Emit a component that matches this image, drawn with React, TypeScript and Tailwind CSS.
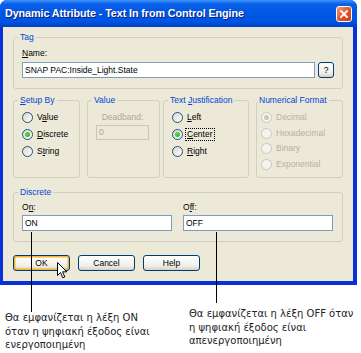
import React from "react";

const F = { fontFamily: '"Liberation Sans", Arial, sans-serif' };

function Radio({ label, checked, disabled, focus, u }: { label: string; checked?: boolean; disabled?: boolean; focus?: boolean; u?: number }) {
  const parts =
    u === undefined ? (
      label
    ) : (
      <>
        {label.slice(0, u)}
        <span className="underline">{label[u]}</span>
        {label.slice(u + 1)}
      </>
    );
  return (
    <div className="flex items-center gap-[3px] h-[17px]">
      <div
        className={
          "w-[11px] h-[11px] rounded-full border flex items-center justify-center shrink-0 " +
          (disabled ? "border-[#cac8bb] bg-[#f4f3ee]" : "border-[#1c5180] bg-[linear-gradient(135deg,#dcd9c5,#ffffff)]")
        }
      >
        {checked && (
          <div className={"w-[5px] h-[5px] rounded-full " + (disabled ? "bg-[#cac8bb]" : "bg-[radial-gradient(circle_at_35%_35%,#5edb5e,#21a121)]")} />
        )}
      </div>
      <span
        className={
          "text-[8.5px] leading-[11px] px-[1px] " +
          (disabled ? "text-[#b5b2a4]" : "text-black") +
          (focus ? " outline outline-1 outline-dotted outline-black" : "")
        }
      >
        {parts}
      </span>
    </div>
  );
}

function Group({ title, className, children, underline }: { title: string; className?: string; children: React.ReactNode; underline?: number }) {
  return (
    <fieldset className={"border border-[#d0d0bf] rounded-[3px] px-[8px] " + (className || "")}>
      <legend className="ml-[-4px] px-[2px] text-[8.5px] leading-[11px] text-[#0046d5]">
        {underline === undefined ? (
          title
        ) : (
          <>
            {title.slice(0, underline)}
            <span className="underline">{title[underline]}</span>
            {title.slice(underline + 1)}
          </>
        )}
      </legend>
      {children}
    </fieldset>
  );
}

function Btn({ children, def, className }: { children: React.ReactNode; def?: boolean; className?: string }) {
  return (
    <div
      className={
        "h-[16px] rounded-[3px] border border-[#003c74] flex items-center justify-center text-[8.5px] text-black bg-[linear-gradient(to_bottom,#ffffff,#f0f0ea_70%,#d6d0c5)] " +
        (def ? "shadow-[inset_0_0_0_1.5px_#f8b330] " : "") +
        (className || "")
      }
    >
      {children}
    </div>
  );
}

export default function App() {
  return (
    <div className="relative w-[361px] h-[353px] bg-white overflow-hidden" style={F}>
      <div className="w-[357px] rounded-t-[7px] bg-[#0831d9] pb-[4px]">
        <div className="h-[27px] rounded-t-[7px] bg-[linear-gradient(to_bottom,#3d95ff_0%,#0a5fe8_15%,#0058e6_45%,#0054e3_80%,#0041c2_100%)] flex items-center justify-between pl-[5px] pr-[5px]">
          <span className="text-white font-bold text-[10.8px] tracking-[-0.1px] [text-shadow:1px_1px_0_#0a1e7a]">
            Dynamic Attribute - Text In from Control Engine
          </span>
          <div className="w-[16px] h-[16px] rounded-[3px] border border-white bg-[linear-gradient(135deg,#f29b7a,#e2562b_50%,#c8391a)] flex items-center justify-center">
            <svg width="10" height="10" viewBox="0 0 10 10">
              <path d="M2 2 L8 8 M8 2 L2 8" stroke="white" strokeWidth="1.8" strokeLinecap="square" />
            </svg>
          </div>
        </div>
        <div className="ml-[3px] mr-[4px] bg-[#ece9d8] px-[10px] pt-[5px] pb-[10px]">
          {/* Tag */}
          <Group title="Tag" className="pb-[10px]">
            <div className="mt-[5px] text-[8.5px] leading-[11px] text-black">
              <span className="underline">N</span>ame:
            </div>
            <div className="mt-[3px] flex items-center gap-[3px]">
              <div className="w-[293px] h-[16px] border border-[#7f9db9] bg-white flex items-center pl-[2px] text-[8.5px] text-black">
                SNAP PAC:Inside_Light.State
              </div>
              <Btn className="w-[16px] !h-[16px] rounded-[2px]">?</Btn>
            </div>
          </Group>

          {/* Row */}
          <div className="mt-[6px] flex">
            <Group title="Setup By" underline={0} className="w-[67px] h-[83px]">
              <div className="mt-[3px]">
                <Radio label="Value" u={1} />
                <Radio label="Discrete" checked u={0} />
                <Radio label="String" u={1} />
              </div>
            </Group>
            <Group title="Value" className="w-[73px] h-[83px] ml-[7px]">
              <div className="mt-[6px] w-[53px] text-center text-[8.5px] leading-[11px] text-[#aca899]">Deadband:</div>
              <div className="mt-[2px] w-[53px] h-[15px] border border-[#c9c7ba] bg-[#ece9d8] flex items-center pl-[2px] text-[8.5px] text-[#aca899]">
                0
              </div>
            </Group>
            <Group title="Text Justification" underline={5} className="w-[86px] h-[83px] ml-[3px]">
              <div className="mt-[3px]">
                <Radio label="Left" u={0} />
                <Radio label="Center" checked focus u={0} />
                <Radio label="Right" u={0} />
              </div>
            </Group>
            <Group title="Numerical Format" className="w-[87px] h-[83px] ml-[7px] !pl-[4px]">
              <div className="mt-[4px] flex flex-col gap-[0px]">
                <div className="h-[15.5px] flex items-center"><Radio label="Decimal" checked disabled /></div>
                <div className="h-[15.5px] flex items-center"><Radio label="Hexadecimal" disabled /></div>
                <div className="h-[15.5px] flex items-center"><Radio label="Binary" disabled /></div>
                <div className="h-[15.5px] flex items-center"><Radio label="Exponential" disabled /></div>
              </div>
            </Group>
          </div>

          {/* Discrete */}
          <Group title="Discrete" className="mt-[9px] pb-[10px]">
            <div className="grid grid-cols-[150px_150px] gap-x-[11px]">
              <div>
                <div className="mt-[4px] text-[8.5px] leading-[11px] text-black">
                  O<span className="underline">n</span>:
                </div>
                <div className="mt-[2px] h-[16px] border border-[#7f9db9] bg-white flex items-center pl-[2px] text-[8.5px] text-black">ON</div>
              </div>
              <div>
                <div className="mt-[4px] text-[8.5px] leading-[11px] text-black">
                  O<span className="underline">f</span>f:
                </div>
                <div className="mt-[2px] h-[16px] border border-[#7f9db9] bg-white flex items-center pl-[2px] text-[8.5px] text-black">OFF</div>
              </div>
            </div>
          </Group>

          {/* Buttons */}
          <div className="mt-[13px] flex gap-[8px]">
            <Btn def className="w-[57px]">OK</Btn>
            <Btn className="w-[57px]">Cancel</Btn>
            <Btn className="w-[57px]">Help</Btn>
          </div>
        </div>
      </div>

      {/* annotations */}
      <div className="flex text-[#222] text-[10px] leading-[13.5px]" style={{ fontFamily: '"DejaVu Sans", Verdana, sans-serif' }}>
        <div className="ml-[5px] mt-[26px] w-[180px]">
          Θα εμφανίζεται η λέξη ON
          <br />
          όταν η ψηφιακή έξοδος είναι
          <br />
          ενεργοποιημένη
        </div>
        <div className="ml-[4px] mt-[22px] w-[170px]">
          Θα εμφανίζεται η λέξη OFF όταν
          <br />
          η ψηφιακή έξοδος είναι
          <br />
          απενεργοποιημένη
        </div>
      </div>

      <div className="absolute left-[31px] top-[232px] w-[1px] h-[80px] bg-black" />
      <div className="absolute left-[216px] top-[232px] w-[1px] h-[71px] bg-black" />

      <svg className="absolute left-[57px] top-[262px]" width="11" height="17" viewBox="0 0 11 17">
        <path d="M0.5 0.5 L0.5 13.5 L3.5 10.5 L5.8 15.8 L7.8 15 L5.6 9.8 L9.8 9.8 Z" fill="white" stroke="black" strokeWidth="1" strokeLinejoin="miter" />
      </svg>
    </div>
  );
}
